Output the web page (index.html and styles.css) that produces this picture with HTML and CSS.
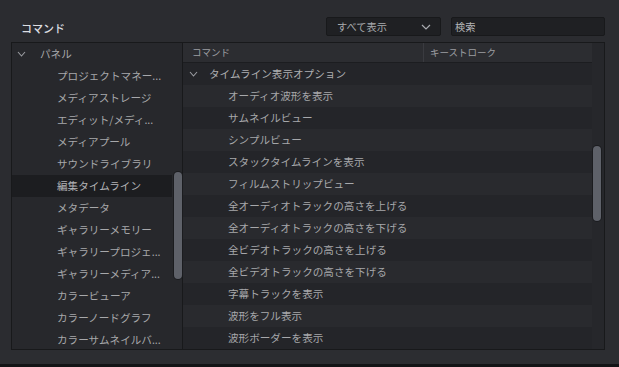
FILE: index.html
```html
<!DOCTYPE html>
<html lang="ja">
<head>
<meta charset="utf-8">
<link rel="stylesheet" href="styles.css">
</head>
<body>
<div class="app">
  <header class="topbar">
    <div class="title">コマンド</div>
    <div class="controls">
      <div class="select">
        <span>すべて表示</span>
        <svg class="chev" width="10" height="6" viewBox="0 0 10 6"><polyline points="1,1 5,5 9,1" fill="none" stroke="#a9abb0" stroke-width="1.2"/></svg>
      </div>
      <div class="search">検索</div>
    </div>
  </header>
  <main class="panel">
    <section class="left">
      <ul class="tree">
        <li class="group"><svg class="tchev" width="9" height="6" viewBox="0 0 9 6"><polyline points="1,1 4.5,5 8,1" fill="none" stroke="#9a9ca1" stroke-width="1.1"/></svg><span>パネル</span></li>
        <li>プロジェクトマネー...</li>
        <li>メディアストレージ</li>
        <li>エディット/メディ...</li>
        <li>メディアプール</li>
        <li>サウンドライブラリ</li>
        <li class="sel">編集タイムライン</li>
        <li>メタデータ</li>
        <li>ギャラリーメモリー</li>
        <li>ギャラリープロジェ...</li>
        <li>ギャラリーメディア...</li>
        <li>カラービューア</li>
        <li>カラーノードグラフ</li>
        <li>カラーサムネイルバ...</li>
      </ul>
      <div class="scroll left-scroll"></div>
    </section>
    <section class="right">
      <div class="thead">
        <div class="th th-cmd">コマンド</div>
        <div class="th th-key">キーストローク</div>
      </div>
      <ul class="rows">
        <li class="group"><svg class="tchev" width="9" height="6" viewBox="0 0 9 6"><polyline points="1,1 4.5,5 8,1" fill="none" stroke="#9a9ca1" stroke-width="1.1"/></svg><span>タイムライン表示オプション</span></li>
        <li>オーディオ波形を表示</li>
        <li>サムネイルビュー</li>
        <li>シンプルビュー</li>
        <li>スタックタイムラインを表示</li>
        <li>フィルムストリップビュー</li>
        <li>全オーディオトラックの高さを上げる</li>
        <li>全オーディオトラックの高さを下げる</li>
        <li>全ビデオトラックの高さを上げる</li>
        <li>全ビデオトラックの高さを下げる</li>
        <li>字幕トラックを表示</li>
        <li>波形をフル表示</li>
        <li>波形ボーダーを表示</li>
      </ul>
      <div class="scroll right-scroll"></div>
    </section>
  </main>
  <div class="footer"></div>
  <div class="bottomline"></div>
</div>
</body>
</html>
```

FILE: styles.css
```css
* { box-sizing: border-box; }
html, body { margin: 0; padding: 0; }
body {
  width: 619px;
  height: 367px;
  overflow: hidden;
  background: #2b2c30;
  font-family: "Noto Sans CJK JP", "Noto Sans", sans-serif;
  color: #a7a8ab;
}
.app { display: flex; flex-direction: column; height: 367px; }
.topbar {
  height: 42px;
  display: flex;
  align-items: center;
  justify-content: space-between;
  padding: 0 14px 0 21px;
}
.title {
  font-size: 11px;
  font-weight: 500;
  color: #dcdde0;
  margin-top: 13px;
}
.controls { display: flex; gap: 10px; margin-top: 11px; }
.select, .search {
  height: 19px;
  background: #1f2023;
  border: 1px solid #18191b;
  border-radius: 2px;
  font-size: 10.2px;
  display: flex;
  align-items: center;
}
.select {
  width: 115px;
  padding: 0 9px 0 10px;
  justify-content: space-between;
  color: #a9abae;
}
.search {
  width: 154px;
  padding-left: 3px;
  color: #b4b5b8;
}
.panel {
  margin: 0 14px 0 11px;
  height: 308px;
  border: 1px solid #18191b;
  display: grid;
  grid-template-columns: 171px 1fr;
  overflow: hidden;
}
.left {
  position: relative;
  background: #27282c;
  border-right: 1px solid #18191b;
}
ul { list-style: none; margin: 0; padding: 0; }
li {
  height: 22px;
  line-height: 22px;
  font-size: 10.6px;
  white-space: nowrap;
}
.tree { width: 160px; }
.tree li { padding-left: 45px; }
.tree li.group { padding-left: 5px; display: flex; align-items: center; }
.tree li.sel { background: #1c1d20; color: #b3b4b7; }
.tchev { margin-right: 14px; }
.scroll {
  position: absolute;
  width: 8px;
  border-radius: 4px;
  background: #5e6169;
  box-shadow: 0 0 0 1px #1b1c1f;
}
.left-scroll { left: 162px; top: 129px; height: 107px; }
.right { position: relative; background: #26272b; }
.thead {
  width: 409px;
  height: 20px;
  display: flex;
  background: #2c2d31;
  border-bottom: 1px solid #1c1d20;
  font-size: 9.5px;
  color: #9c9ea2;
}
.th { line-height: 19px; }
.th-cmd { width: 241px; padding-left: 9px; border-right: 1px solid #3a3b40; }
.th-key { padding-left: 6px; }
.rows { width: 409px; }
.rows li { padding-left: 45px; background: #242529; }
.rows li:nth-child(even) { background: #292a2e; }
.rows li.group { padding-left: 6px; display: flex; align-items: center; color: #aeafb2; }
.rows .tchev { margin-right: 11px; }
.right-scroll { left: 410px; top: 103px; height: 75px; }
.footer { height: 14px; background: #2c2d31; }
.bottomline { flex: 1; background: #131416; }
```
